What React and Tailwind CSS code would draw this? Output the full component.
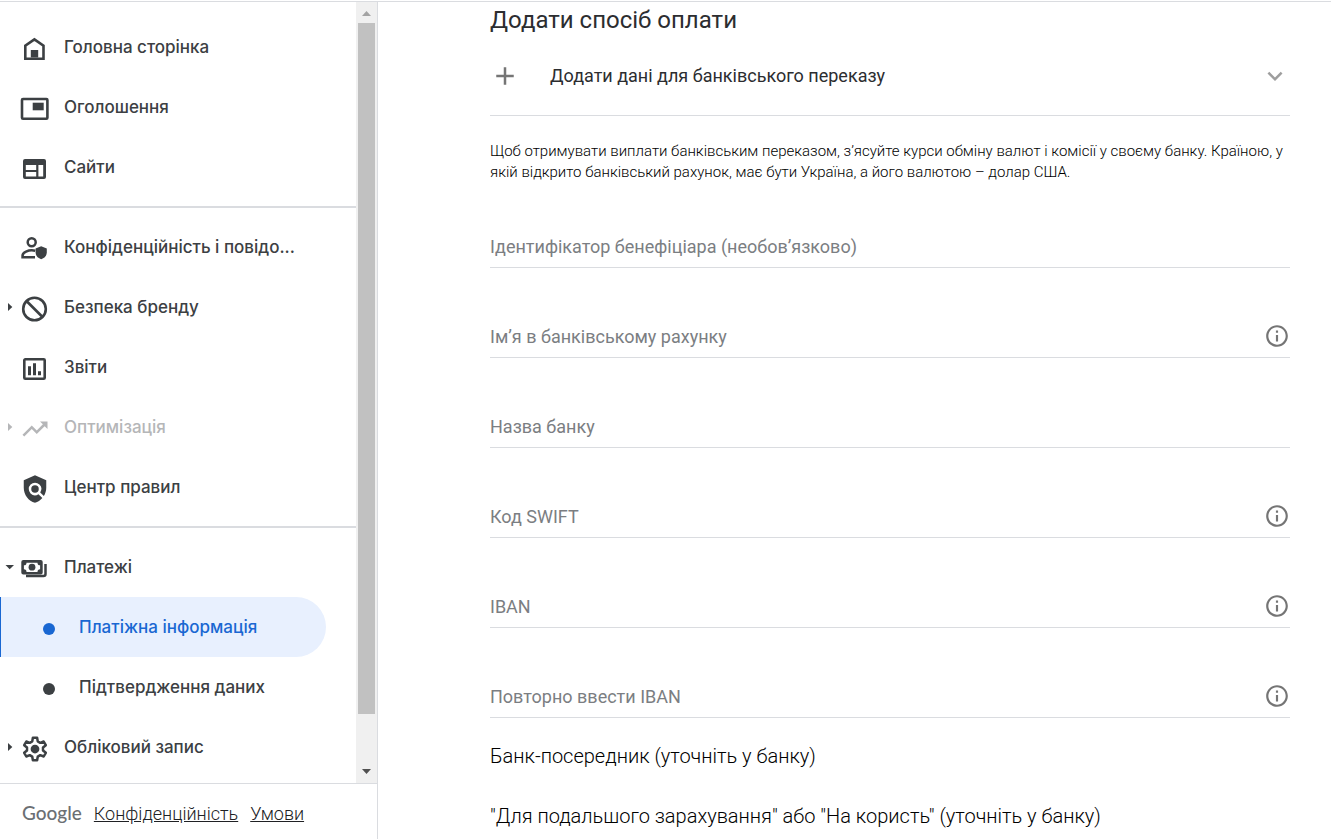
import { MdAdd, MdExpandMore, MdInfoOutline, MdPolicy, MdTrendingUp } from "react-icons/md";

function Drawing({ children }) {
  return (
    <svg viewBox="0 0 30 30" className="h-full w-full" fill="currentColor" aria-hidden="true">
      {children}
    </svg>
  );
}

const icons = {
  home: (
    <Drawing>
      <path d="M5.3 24.7V11.6L14.4 5.4l9.1 6.2v13.1z" fill="none" stroke="currentColor" strokeWidth="2.6" />
      <path d="M10.8 16h7.4v7.4h-7.4z" />
    </Drawing>
  ),
  ads: (
    <Drawing>
      <rect x="2" y="5" width="25.4" height="19.8" rx="1" fill="none" stroke="currentColor" strokeWidth="2.6" />
      <path d="M12.7 8.7h11v7.6h-11z" />
    </Drawing>
  ),
  sites: (
    <Drawing>
      <path
        fillRule="evenodd"
        d="M5 5h19a2 2 0 0 1 2 2v16a2 2 0 0 1-2 2H5a2 2 0 0 1-2-2V7a2 2 0 0 1 2-2zM5.8 11v5h10.4v-5zM5.8 18v4.6h10.4V18zM18.4 11v11.6h4.8V11z"
      />
    </Drawing>
  ),
  privacy: (
    <Drawing>
      <circle cx="11.7" cy="8.3" r="4" fill="none" stroke="currentColor" strokeWidth="2.5" />
      <path
        d="M15 23.3H2.6V21.4c0-3.2 6-5.1 9.2-5.1 1.2 0 2.3.2 3.4.5"
        fill="none"
        stroke="currentColor"
        strokeWidth="2.6"
      />
      <path d="M21.2 12.3l5.6 2.2v4c0 3-2.2 5.7-5.6 6.7-3.4-1-5.6-3.7-5.6-6.7v-4z" />
    </Drawing>
  ),
  block: (
    <Drawing>
      <g fill="none" stroke="currentColor" strokeWidth="2.6">
        <circle cx="14.5" cy="15" r="11.3" />
        <path d="M6.5 7l16 16" />
      </g>
    </Drawing>
  ),
  reports: (
    <Drawing>
      <rect x="4.3" y="5.3" width="20.4" height="19.4" rx="1" fill="none" stroke="currentColor" strokeWidth="2.6" />
      <path d="M8 12.3h3v9H8zM13 9.3h3v12h-3zM18 17.3h3v4h-3z" />
    </Drawing>
  ),
  trend: <MdTrendingUp className="h-full w-full" aria-hidden="true" />,
  policy: <MdPolicy className="h-full w-full" aria-hidden="true" />,
  payments: (
    <Drawing>
      <path
        fillRule="evenodd"
        d="M3.3 6h17.4a2 2 0 0 1 2 2v10.5a2 2 0 0 1-2 2H3.3a2 2 0 0 1-2-2V8a2 2 0 0 1 2-2zM6.5 8.700a2.600 2.600 0 0 1-2.600 2.600v4a2.600 2.600 0 0 1 2.600 2.600h11a2.600 2.600 0 0 1 2.600-2.600v-4a2.600 2.600 0 0 1-2.600-2.600z"
      />
      <circle cx="12" cy="13.2" r="3.4" />
      <path d="M25.5 10v10a2 2 0 0 1-2 2H6" fill="none" stroke="currentColor" strokeWidth="2.5" />
    </Drawing>
  ),
  settings: (
    <svg viewBox="0 0 24 24" className="h-full w-full" fill="currentColor" aria-hidden="true">
      <path
        d="M10.3 3h3.400l.5 2.900 2 1.150 2.750-1.050 1.700 2.950-2.250 1.900v2.300l2.250 1.900-1.700 2.950-2.750-1.050-2 1.150-.5 2.900h-3.400l-.5-2.900-2-1.150L5.050 18l-1.700-2.950 2.250-1.900v-2.300l-2.250-1.900L5.050 6 7.800 7.050l2-1.150z"
        fill="none"
        stroke="currentColor"
        strokeWidth="2"
        strokeLinejoin="round"
      />
      <circle cx="12" cy="12" r="3.5" />
    </svg>
  ),
};

const groups = [
  [
    { label: "Головна сторінка", icon: "home" },
    { label: "Оголошення", icon: "ads" },
    { label: "Сайти", icon: "sites" },
  ],
  [
    { label: "Конфіденційність і повідо...", icon: "privacy" },
    { label: "Безпека бренду", icon: "block", caret: "right" },
    { label: "Звіти", icon: "reports" },
    { label: "Оптимізація", icon: "trend", caret: "right", disabled: true },
    { label: "Центр правил", icon: "policy" },
  ],
  [
    { label: "Платежі", icon: "payments", caret: "down" },
    { label: "Платіжна інформація", sub: true, active: true },
    { label: "Підтвердження даних", sub: true },
    { label: "Обліковий запис", icon: "settings", caret: "right" },
  ],
];

const fields = [
  { id: "beneficiary", label: "Ідентифікатор бенефіціара (необов’язково)" },
  { id: "holder", label: "Ім’я в банківському рахунку", info: true },
  { id: "bank", label: "Назва банку" },
  { id: "swift", label: "Код SWIFT", info: true },
  { id: "iban", label: "IBAN", info: true },
  { id: "iban2", label: "Повторно ввести IBAN", info: true },
];

function Caret({ direction }) {
  return (
    <svg viewBox="0 0 10 10" className="h-[10px] w-[10px]" fill="currentColor" aria-hidden="true">
      {direction === "right" && <path d="M3 1l4.3 4L3 9z" />}
      {direction === "down" && <path d="M.5 3H9L4.7 7.300z" />}
    </svg>
  );
}

function NavItem({ item }) {
  if (item.sub) {
    return (
      <li>
        <a
          href="#"
          aria-current={item.active ? "page" : undefined}
          className={
            item.active
              ? "mr-[30px] flex h-[60px] items-center rounded-r-full border-l border-[#1967d2] bg-[#e8f0fe] pl-[42px] text-[#1967d2]"
              : "mr-[30px] flex h-[60px] items-center pl-[43px] text-[#3c4043]"
          }
        >
          <span className="mt-1 mr-6 h-3 w-3 rounded-full bg-current" />
          <span>{item.label}</span>
        </a>
      </li>
    );
  }
  return (
    <li>
      <a
        href="#"
        aria-disabled={item.disabled}
        className={
          item.disabled
            ? "flex h-[60px] items-center pl-[5px] text-[#b5b6b8]"
            : "flex h-[60px] items-center pl-[5px] text-[#3c4043]"
        }
      >
        <span className="mr-[5px] shrink-0">
          <Caret direction={item.caret} />
        </span>
        <span className="mt-1 mr-[14px] h-[30px] w-[30px] shrink-0">{icons[item.icon]}</span>
        <span className="whitespace-nowrap">{item.label}</span>
      </a>
    </li>
  );
}

function Scrollbar() {
  return (
    <div className="flex w-[21px] shrink-0 flex-col bg-[#f0f0f0] px-[2px]" aria-hidden="true">
      <svg viewBox="0 0 17 21" className="h-[21px] w-[17px]">
        <path d="M4 14h9L8.5 9z" fill="#a3a3a3" />
      </svg>
      <div className="min-h-0 flex-1">
        <div className="h-[93.5%] bg-[#c1c1c1]" />
      </div>
      <svg viewBox="0 0 17 21" className="h-[21px] w-[17px]">
        <path d="M4 7h9l-4.500 5z" fill="#505050" />
      </svg>
    </div>
  );
}

export default function App() {
  return (
    <div className="flex h-screen overflow-hidden border-t border-white bg-white font-['Roboto','Liberation_Sans',sans-serif]">
      <aside className="flex w-[378px] shrink-0 flex-col border-t border-r border-[#dadce0]">
        <div className="flex min-h-0 flex-1">
          <nav className="min-w-0 flex-1 overflow-hidden pt-[15px] font-['Inter','Roboto',sans-serif] text-[17px] leading-[26px] font-medium">
            {groups.map((group, index) => (
              <ul key={index} className={index > 0 ? "mt-[9px] border-t-2 border-[#dadce0] pt-[9px]" : ""}>
                {group.map((item) => (
                  <NavItem key={item.label} item={item} />
                ))}
              </ul>
            ))}
          </nav>
          <Scrollbar />
        </div>
        <footer className="flex h-14 shrink-0 items-center border-t border-[#dadce0] pt-[2px] pl-[22px]">
          <div className="flex items-baseline gap-3 text-lg font-light text-[#202124]">
            <span className="font-['Lato',sans-serif] text-[19px] font-medium text-[#6b6f73]">Google</span>
            <a href="#" className="underline">Конфіденційність</a>
            <a href="#" className="underline">Умови</a>
          </div>
        </footer>
      </aside>

      <main className="min-w-0 flex-1 overflow-hidden border-t border-[#dadce0] pr-[41px] pl-28 text-lg text-[#2c2d30]">
        <h1 className="pt-[2px] text-2xl leading-[33px]">Додати спосіб оплати</h1>
        <button type="button" className="flex h-[79px] w-full items-center border-b border-[#dadce0] pb-[1px] text-left">
          <MdAdd className="mr-[30px] h-[30px] w-[30px] text-[#757575]" aria-hidden="true" />
          <span className="flex-1">Додати дані для банківського переказу</span>
          <MdExpandMore className="h-[30px] w-[30px] text-[#9e9e9e]" aria-hidden="true" />
        </button>
        <p className="mt-[25px] text-[15px] leading-[21px] font-light text-black">
          Щоб отримувати виплати банківським переказом, з’ясуйте курси обміну валют і комісії у своєму банку. Країною, у
          якій відкрито банківський рахунок, має бути Україна, а його валютою – долар США.
        </p>
        <form className="mt-[-5px]">
          {fields.map((field) => (
            <div key={field.id} className="flex h-[90px] items-end border-b border-[#dadce0]">
              <div className="grid min-w-0 flex-1">
                <input
                  id={field.id}
                  type="text"
                  placeholder=" "
                  className="peer col-start-1 row-start-1 h-10 bg-transparent focus:outline-none"
                />
                <label
                  htmlFor={field.id}
                  className="pointer-events-none invisible col-start-1 row-start-1 self-center text-[#7b7e82] peer-placeholder-shown:visible"
                >
                  {field.label}
                </label>
              </div>
              {field.info && (
                <button type="button" aria-label="Довідка" className="mb-2 text-[#757575]">
                  <MdInfoOutline className="h-[26px] w-[26px]" aria-hidden="true" />
                </button>
              )}
            </div>
          ))}
        </form>
        <div className="flex flex-col items-start pt-2 text-xl font-light text-black">
          <button type="button" className="h-[60px] text-left">Банк-посередник (уточніть у банку)</button>
          <button type="button" className="h-[60px] text-left">
            "Для подальшого зарахування" або "На користь" (уточніть у банку)
          </button>
        </div>
      </main>
    </div>
  );
}
